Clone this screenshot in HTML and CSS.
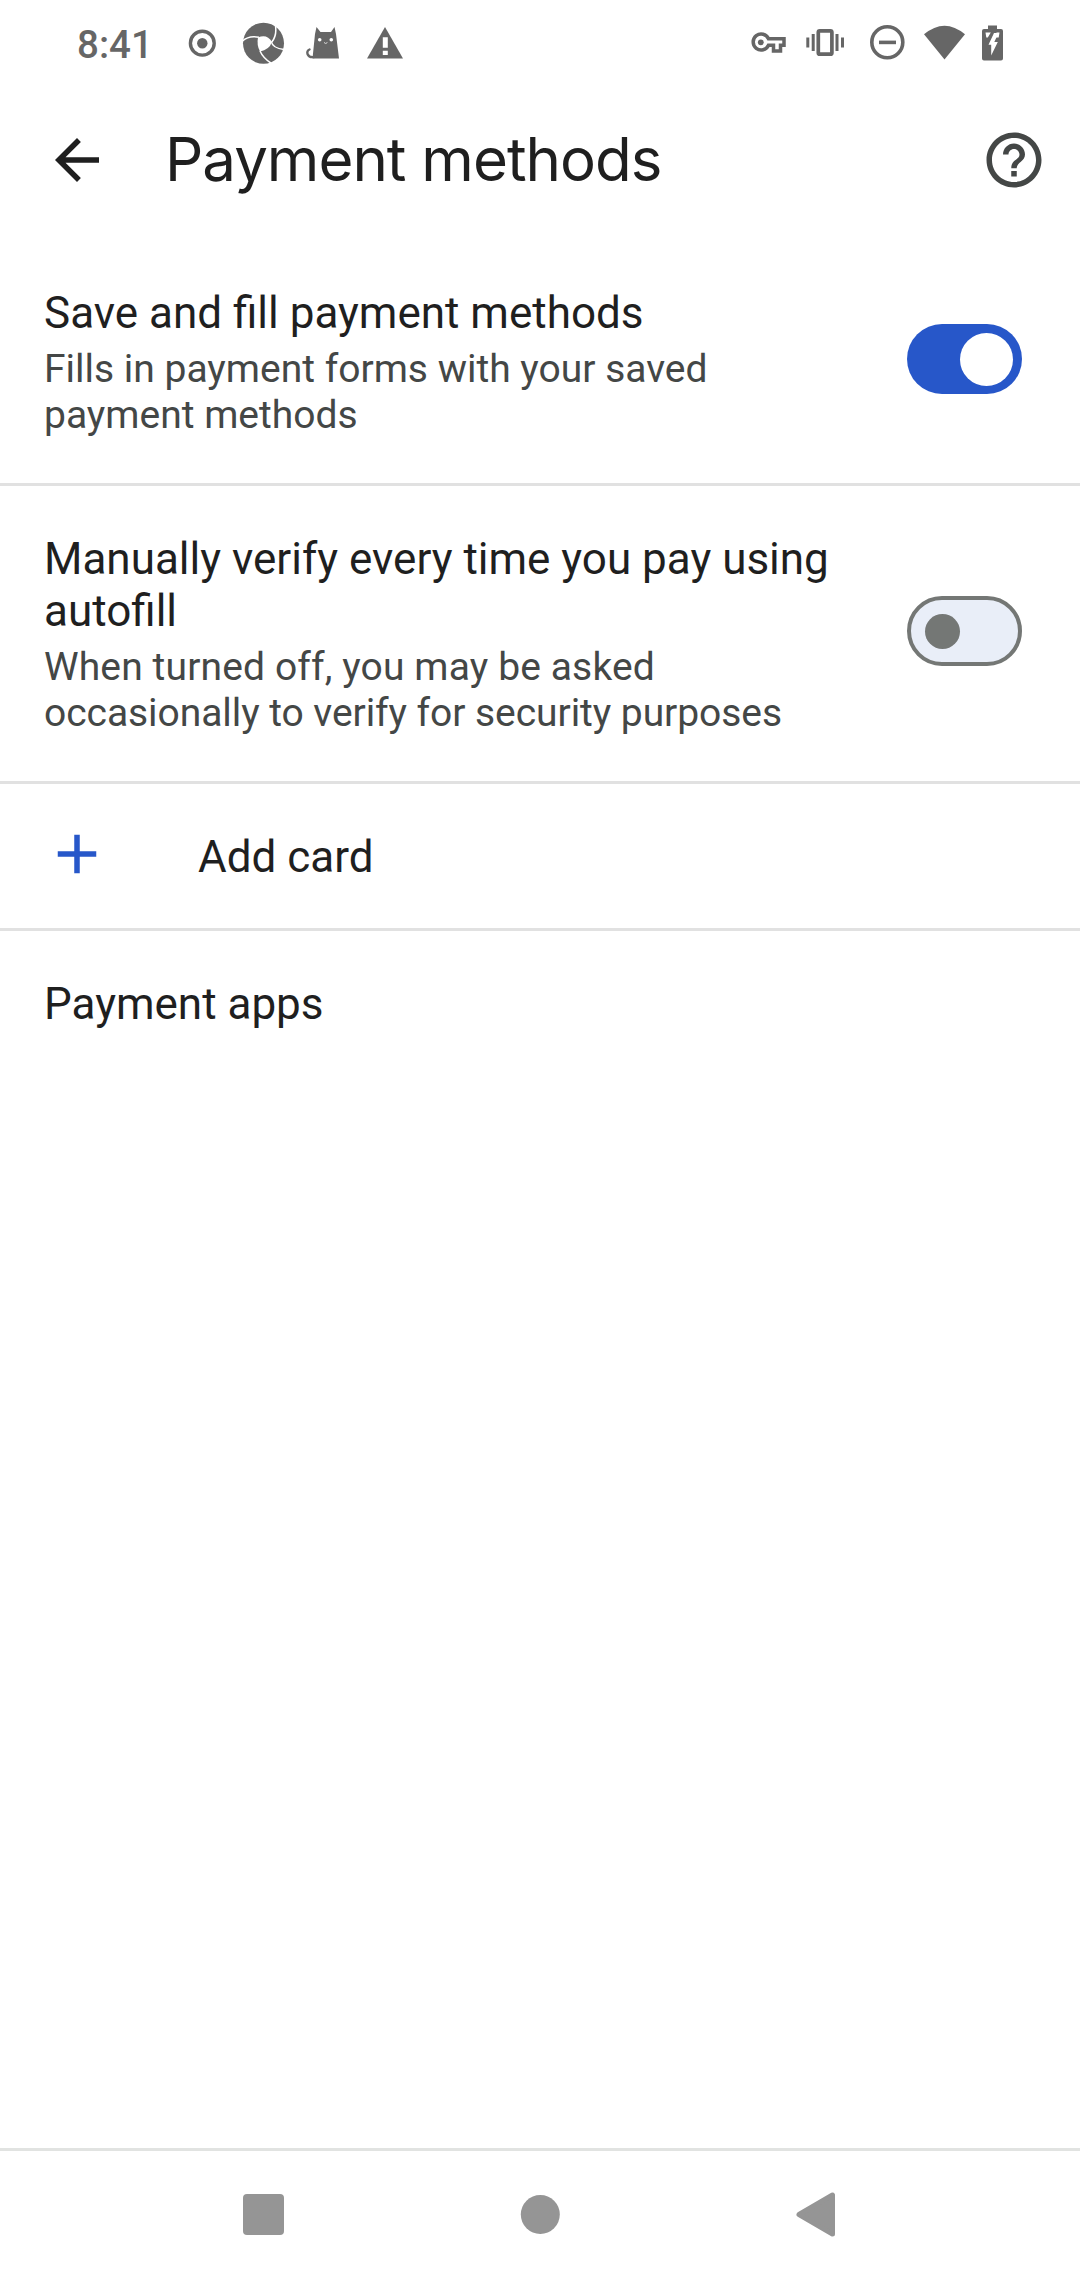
FILE: index.html
```html
<!DOCTYPE html>
<html lang="en">
<head>
<meta charset="utf-8">
<title>Payment methods</title>
<link rel="stylesheet" href="styles.css">
</head>
<body>
<div class="screen">
  <div class="status">
    <span class="time">8:41</span>
    <svg width="49" height="50" viewBox="178 18 49 50"><circle cx="202.3" cy="43.2" r="11.9" fill="none" stroke="#666" stroke-width="3.4"/><circle cx="202.3" cy="43.2" r="5.2"/></svg>
    <svg width="61" height="50" viewBox="227 18 61 50"><circle cx="263.5" cy="43.3" r="20.5"/><path fill="#fff" d="M258 37.5Q267 33.5 272 42Q269 50 260 51.5Q256.500 45 258 37.500Z"/><path fill="none" stroke="#fff" stroke-width="1.500" d="M242.500 41Q249 35 259 37.300M275.500 26Q277 36 271.500 42.500M271.500 42Q272.500 48 284 49.500M260 51Q263 58 271.500 63.500"/></svg>
    <svg width="61" height="50" viewBox="288 18 61 50"><path d="M316.500 27L320.500 32H331L334.500 27L336 34L339 58.500H312.500L315 34Z"/><path d="M314 57C307 58 305.500 51 309.500 49.500" fill="none" stroke="#666" stroke-width="2.400" stroke-linecap="round"/><circle cx="319.700" cy="39.700" r="1.800" fill="#fff"/><circle cx="331.300" cy="39.700" r="1.800" fill="#fff"/><path d="M324 42.500L325.700 43.500L327.400 42.500" fill="none" stroke="#ddd"/></svg>
    <svg width="61" height="50" viewBox="349 18 61 50"><path d="M385 27L403 58.500H367Z"/><path fill="#fff" d="M382.800 37.300h5v10.400h-5zM382.800 50.700h5v4.300h-5z"/></svg>
    <span class="spacer"></span>
    <svg width="56" height="50" viewBox="740 18 56 50"><path fill="none" stroke="#666" stroke-width="3.500" d="M768.500 38.800H784V45.300H780.500V51H773.500V45.300H768.500A8 8 0 1 1 768.500 38.800Z"/><circle cx="760.800" cy="42.300" r="2.900"/></svg>
    <svg width="60" height="50" viewBox="796 18 60 50"><rect x="818.300" y="30.800" width="13.600" height="23.400" rx="1.500" fill="none" stroke="#666" stroke-width="3.700"/><path d="M806.300 37.500h3v10h-3zM811.700 34h3v17h-3zM835.500 34h3v17h-3zM841 37.500h3v10h-3z"/></svg>
    <svg width="60" height="50" viewBox="856 18 60 50"><circle cx="887.300" cy="42.300" r="15.500" fill="none" stroke="#666" stroke-width="3.600"/><path d="M879 40.600h17v3.600h-17z"/></svg>
    <svg width="58" height="50" viewBox="916 18 58 50"><path d="M924 34.300Q944.500 17 965 34.300L944.500 59.500Z"/></svg>
    <svg width="40" height="50" viewBox="974 18 40 50"><path d="M988 25.500h9v3.500h4q2 0 2 2v27.500q0 2-2 2h-17q-2 0-2-2v-27.500q0-2 2-2h4z"/><path fill="#fff" d="M994 33L988.500 44.800H991.200V55.500L997.800 42H994.300L998.500 33Z"/><path d="M985.500 32.500h5.300l-3 5h-1.500zM996.500 32.500h3l-.8 5h-3z" fill="#fff"/></svg>
  </div>

  <header class="toolbar">
    <svg class="icon back" viewBox="0 0 24 24"><path d="M20 11H7.830l5.590-5.590L12 4l-8 8 8 8 1.410-1.410L7.830 13H20z"/></svg>
    <h1>Payment methods</h1>
    <svg class="icon help" viewBox="0 0 24 24"><path d="M11 18h2v-2h-2v2zm1-16C6.480 2 2 6.480 2 12s4.480 10 10 10 10-4.480 10-10S17.520 2 12 2zm0 18c-4.410 0-8-3.590-8-8s3.590-8 8-8 8 3.590 8 8-3.590 8-8 8zm0-14c-2.210 0-4 1.790-4 4h2c0-1.100.9-2 2-2s2 .9 2 2c0 2-3 1.750-3 5h2c0-2.250 3-2.500 3-5 0-2.210-1.790-4-4-4z"/></svg>
  </header>

  <main>
    <section class="row save">
      <div class="text">
        <div class="title"><span>Save and fill payment methods</span></div>
        <div class="summary"><span>Fills in payment forms with your saved</span> <span>payment methods</span></div>
      </div>
      <div class="switch on"><div class="thumb"></div></div>
    </section>
    <section class="row verify">
      <div class="text">
        <div class="title"><span>Manually verify every time you pay using</span> <span>autofill</span></div>
        <div class="summary"><span class="loose">When turned off, you may be asked</span> <span class="tight">occasionally to verify for security purposes</span></div>
      </div>
      <div class="switch"><div class="thumb"></div></div>
    </section>
    <section class="row add">
      <svg class="icon plus" viewBox="0 0 24 24"><path d="M19 13h-6v6h-2v-6H5v-2h6V5h2v6h6z"/></svg>
      <div class="title">Add card</div>
    </section>
    <section class="row apps">
      <div class="title">Payment apps</div>
    </section>
  </main>

  <nav>
    <svg width="60" height="60" viewBox="234 2185 60 60"><rect x="243" y="2194" width="41" height="41" rx="4"/></svg>
    <svg width="60" height="60" viewBox="510 2185 60 60"><circle cx="540.300" cy="2214.500" r="19.500"/></svg>
    <svg width="60" height="60" viewBox="786 2185 60 60"><path stroke="#959595" stroke-width="5" stroke-linejoin="round" d="M799 2214.500L832.500 2195V2234Z"/></svg>
  </nav>
</div>
</body>
</html>
```
FILE: styles.css
```css
* {
  box-sizing: border-box;
}

body {
  margin: 0;
  background: #fff;
  color: #1f1f1f;
  font-family: Roboto, sans-serif;
}

svg {
  display: block;
  flex: none;
}

.screen {
  display: flex;
  flex-direction: column;
  width: 1080px;
  height: 2280px;
}

.status {
  display: flex;
  height: 85px;
  padding: 18px 66px 0 77px;
  fill: #666;
}

.time {
  width: 101px;
  color: #666;
  font-size: 38.5px;
  font-weight: 500;
  line-height: 53px;
}

.spacer {
  flex: 1;
}

.toolbar {
  display: flex;
  align-items: center;
  height: 150px;
  padding: 0 33px 0 44px;
}

.icon {
  width: 66px;
  height: 66px;
}

.back {
  fill: #1f1f1f;
}

.help {
  fill: #444746;
}

h1 {
  flex: 1;
  margin: 0 0 2px 55px;
  font-family: Inter, sans-serif;
  font-size: 60px;
  font-weight: 400;
  letter-spacing: -1px;
  line-height: 80px;
  white-space: nowrap;
}

main {
  flex: 1;
}

.row {
  display: flex;
  justify-content: space-between;
  padding: 47px 58px 0 44px;
  border-bottom: 3px solid #e1e1e1;
}

.save {
  height: 251px;
  padding-top: 52px;
}

.verify {
  height: 298px;
}

.add {
  height: 147px;
  justify-content: flex-start;
  gap: 88px;
}

.apps {
  border: 0;
}

.text {
  width: 790px;
}

.title {
  font-size: 44px;
  line-height: 52px;
}

.summary {
  margin-top: 7px;
  color: #444746;
  font-size: 39px;
  line-height: 46px;
}

.text span {
  display: inline-block;
  white-space: nowrap;
}

.loose {
  letter-spacing: 0.13px;
}

.tight {
  letter-spacing: -0.06px;
}

.switch {
  display: flex;
  align-items: center;
  width: 115px;
  height: 70px;
  margin-top: 63px;
  padding-left: 14px;
  border: 4px solid #747775;
  border-radius: 35px;
  background: #e9eef8;
}

.thumb {
  width: 35px;
  height: 35px;
  border-radius: 50%;
  background: #747775;
}

.switch.on {
  margin-top: 37px;
  padding-left: 53px;
  border: 0;
  background: #2757c9;
}

.on .thumb {
  width: 53px;
  height: 53px;
  background: #fff;
}

.plus {
  margin-top: -10px;
  fill: #2757c9;
}

nav {
  display: flex;
  justify-content: space-between;
  height: 132px;
  padding: 34px 234px 0;
  border-top: 3px solid #e1e3e1;
  fill: #959595;
}
```
